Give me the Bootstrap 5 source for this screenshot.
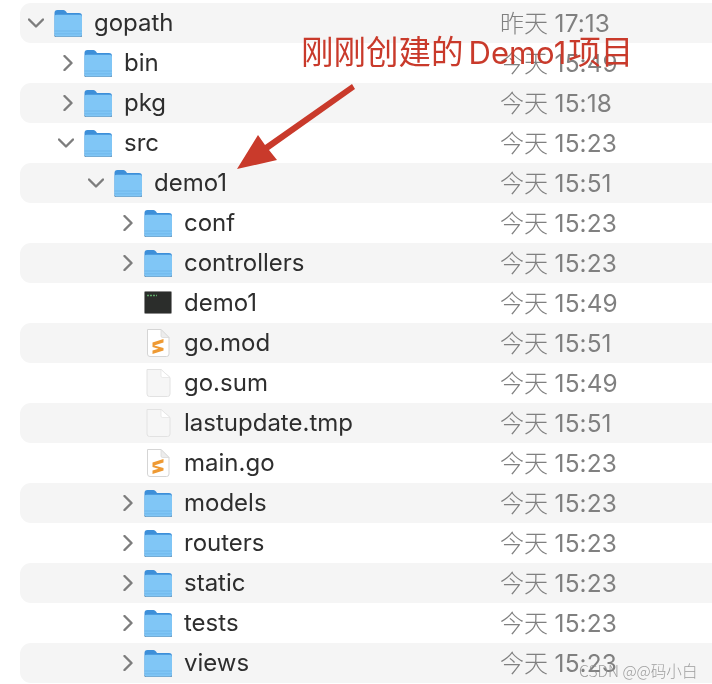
<!doctype html>
<html lang="zh">
<head>
<meta charset="utf-8">
<title>Finder</title>
<link href="https://cdn.jsdelivr.net/npm/bootstrap@5.3.0/dist/css/bootstrap.min.css" rel="stylesheet">
<style>
html,body{height:684px;overflow:hidden;background:#fff}
body{font-family:Inter,"Noto Sans CJK SC",sans-serif;position:relative;padding-top:3px}
.soft{filter:blur(.4px)}
.frow{height:40px;margin-left:20px;color:#2e2e2e;font-size:24px;line-height:40px}
.frow:nth-child(odd){background:#f5f5f5;border-radius:11px 0 0 11px}
.lv0{--ind:0px}.lv1{--ind:30px}.lv2{--ind:60px}.lv3{--ind:90px}
.tree{width:480px;padding-left:var(--ind);flex:none}
.chev{width:34px;flex:none;display:flex;justify-content:flex-start;padding-left:8px}
.chev svg{width:16px;height:16px;display:block}
.chev .rt{margin-left:2px}
.ficon{width:28px;height:30px;flex:none;margin-right:12px;display:block;margin-top:-2px}
.fdate{color:#808080;font-size:24px;font-family:"Noto Sans CJK SC",sans-serif;font-weight:300;white-space:nowrap;letter-spacing:.1px;margin-top:-2px}
.fdate b{font-family:Inter,sans-serif;font-weight:400;font-size:24.400px;margin-left:1px}
.note{position:absolute;left:301px;top:27px;color:#c93a2b;font-size:32.500px;line-height:40px;white-space:nowrap;font-family:"Noto Sans CJK SC",sans-serif;font-weight:400}
.note b{font-family:Inter,sans-serif;font-weight:400;margin:0 2px 0 5px;font-size:31px}
.arrow{position:absolute;left:230px;top:75px;width:130px;height:100px}
.mark-w{position:absolute;left:579px;top:656px;font-size:15.600px;line-height:22px;color:#8f8f8f;white-space:nowrap;opacity:.85;font-family:"Noto Sans CJK SC",sans-serif;font-weight:300}
</style>
</head>
<body>
<svg width="0" height="0" class="position-absolute">
<defs>
<symbol id="fo" viewBox="0 0 28 30">
<path d="M0.500 6Q0.500 3 3.500 3H9.500Q11 3 12 4.500L13 6H25Q28 6 28 9V28Q28 30 26 30H2.500Q0.500 30 0.500 28Z" fill="#3d8fd9"/>
<path d="M0.500 9.500Q0.500 7.800 2.500 7.800H26Q28 7.800 28 9.500V27.500Q28 30 26 30H2.500Q0.500 30 0.500 27.500Z" fill="#80c6f6"/>
<path d="M0.500 24H28M0.500 26.800H28" stroke="#6ab4ea" stroke-width=".8"/>
<path d="M0.500 28.500Q0.500 30 2.500 30H26Q28 30 28 28.500" fill="none" stroke="#6a93b3" stroke-width="1"/>
</symbol>
<symbol id="go" viewBox="0 0 28 30">
<path d="M3.500 2.500H17L25 10.500V27Q25 29.500 22.500 29.500H6Q3.500 29.500 3.500 27Z" fill="#fff" stroke="#d5d5d5"/>
<path d="M17 2.500V9Q17 10.500 18.500 10.500H25Z" fill="#ececec" stroke="#d5d5d5" stroke-width=".7"/>
<path d="M8.500 15.500L19.500 12V15.500L8.500 19ZM8.500 18L19.500 21V23.500L8.500 27V23.500L14.500 21.700L8.500 20Z" fill="#ee9a34"/>
</symbol>
<symbol id="bl" viewBox="0 0 28 30">
<path d="M3 2.500H17L26 10.500V27Q26 29.500 23.500 29.500H5.500Q3 29.500 3 27Z" fill="#f6f6f6" stroke="#e2e2e2"/>
<path d="M17 2.500V9Q17 10.500 18.500 10.500H26Z" fill="#fff" stroke="#e2e2e2" stroke-width=".7"/>
</symbol>
<symbol id="ex" viewBox="0 0 28 30">
<rect x="0.500" y="4.500" width="27" height="22" rx="1" fill="#2b2d2b" stroke="#8a8a8a"/>
<path d="M3 8.500H13" stroke="#5fa868" stroke-width="1.400" stroke-dasharray="2 1"/>
</symbol>
<symbol id="cr" viewBox="0 0 16 16"><path d="M4.500 1L11.500 8L4.500 15" fill="none" stroke="#7d7d7d" stroke-width="2.400" stroke-linecap="round" stroke-linejoin="round"/></symbol>
<symbol id="cd" viewBox="0 0 16 16"><path d="M1 4.500L8 11.500L15 4.500" fill="none" stroke="#7d7d7d" stroke-width="2.400" stroke-linecap="round" stroke-linejoin="round"/></symbol>
</defs>
</svg>
<div class="soft">
<div class="d-flex flex-column">
<div class="frow d-flex align-items-center"><div class="tree lv0 d-flex align-items-center"><span class="chev"><svg><use href="#cd"/></svg></span><svg class="ficon"><use href="#fo"/></svg>gopath</div><span class="fdate">昨天 <b>17:13</b></span></div>
<div class="frow d-flex align-items-center"><div class="tree lv1 d-flex align-items-center"><span class="chev"><svg class="rt"><use href="#cr"/></svg></span><svg class="ficon"><use href="#fo"/></svg>bin</div><span class="fdate">今天 <b>15:49</b></span></div>
<div class="frow d-flex align-items-center"><div class="tree lv1 d-flex align-items-center"><span class="chev"><svg class="rt"><use href="#cr"/></svg></span><svg class="ficon"><use href="#fo"/></svg>pkg</div><span class="fdate">今天 <b>15:18</b></span></div>
<div class="frow d-flex align-items-center"><div class="tree lv1 d-flex align-items-center"><span class="chev"><svg><use href="#cd"/></svg></span><svg class="ficon"><use href="#fo"/></svg>src</div><span class="fdate">今天 <b>15:23</b></span></div>
<div class="frow d-flex align-items-center"><div class="tree lv2 d-flex align-items-center"><span class="chev"><svg><use href="#cd"/></svg></span><svg class="ficon"><use href="#fo"/></svg>demo1</div><span class="fdate">今天 <b>15:51</b></span></div>
<div class="frow d-flex align-items-center"><div class="tree lv3 d-flex align-items-center"><span class="chev"><svg class="rt"><use href="#cr"/></svg></span><svg class="ficon"><use href="#fo"/></svg>conf</div><span class="fdate">今天 <b>15:23</b></span></div>
<div class="frow d-flex align-items-center"><div class="tree lv3 d-flex align-items-center"><span class="chev"><svg class="rt"><use href="#cr"/></svg></span><svg class="ficon"><use href="#fo"/></svg>controllers</div><span class="fdate">今天 <b>15:23</b></span></div>
<div class="frow d-flex align-items-center"><div class="tree lv3 d-flex align-items-center"><span class="chev"></span><svg class="ficon"><use href="#ex"/></svg>demo1</div><span class="fdate">今天 <b>15:49</b></span></div>
<div class="frow d-flex align-items-center"><div class="tree lv3 d-flex align-items-center"><span class="chev"></span><svg class="ficon"><use href="#go"/></svg>go.mod</div><span class="fdate">今天 <b>15:51</b></span></div>
<div class="frow d-flex align-items-center"><div class="tree lv3 d-flex align-items-center"><span class="chev"></span><svg class="ficon"><use href="#bl"/></svg>go.sum</div><span class="fdate">今天 <b>15:49</b></span></div>
<div class="frow d-flex align-items-center"><div class="tree lv3 d-flex align-items-center"><span class="chev"></span><svg class="ficon"><use href="#bl"/></svg>lastupdate.tmp</div><span class="fdate">今天 <b>15:51</b></span></div>
<div class="frow d-flex align-items-center"><div class="tree lv3 d-flex align-items-center"><span class="chev"></span><svg class="ficon"><use href="#go"/></svg>main.go</div><span class="fdate">今天 <b>15:23</b></span></div>
<div class="frow d-flex align-items-center"><div class="tree lv3 d-flex align-items-center"><span class="chev"><svg class="rt"><use href="#cr"/></svg></span><svg class="ficon"><use href="#fo"/></svg>models</div><span class="fdate">今天 <b>15:23</b></span></div>
<div class="frow d-flex align-items-center"><div class="tree lv3 d-flex align-items-center"><span class="chev"><svg class="rt"><use href="#cr"/></svg></span><svg class="ficon"><use href="#fo"/></svg>routers</div><span class="fdate">今天 <b>15:23</b></span></div>
<div class="frow d-flex align-items-center"><div class="tree lv3 d-flex align-items-center"><span class="chev"><svg class="rt"><use href="#cr"/></svg></span><svg class="ficon"><use href="#fo"/></svg>static</div><span class="fdate">今天 <b>15:23</b></span></div>
<div class="frow d-flex align-items-center"><div class="tree lv3 d-flex align-items-center"><span class="chev"><svg class="rt"><use href="#cr"/></svg></span><svg class="ficon"><use href="#fo"/></svg>tests</div><span class="fdate">今天 <b>15:23</b></span></div>
<div class="frow d-flex align-items-center"><div class="tree lv3 d-flex align-items-center"><span class="chev"><svg class="rt"><use href="#cr"/></svg></span><svg class="ficon"><use href="#fo"/></svg>views</div><span class="fdate">今天 <b>15:23</b></span></div>
</div>
<div class="note">刚刚创建的<b>Demo1</b>项目</div>
<svg class="arrow" viewBox="0 0 130 100"><path d="M122 6L125 11L39 72L47 82L7 91L28 57L35 67Z" fill="#c93a2b"/></svg>
<div class="mark-w">CSDN @@码小白</div>
</div>
</body>
</html>
